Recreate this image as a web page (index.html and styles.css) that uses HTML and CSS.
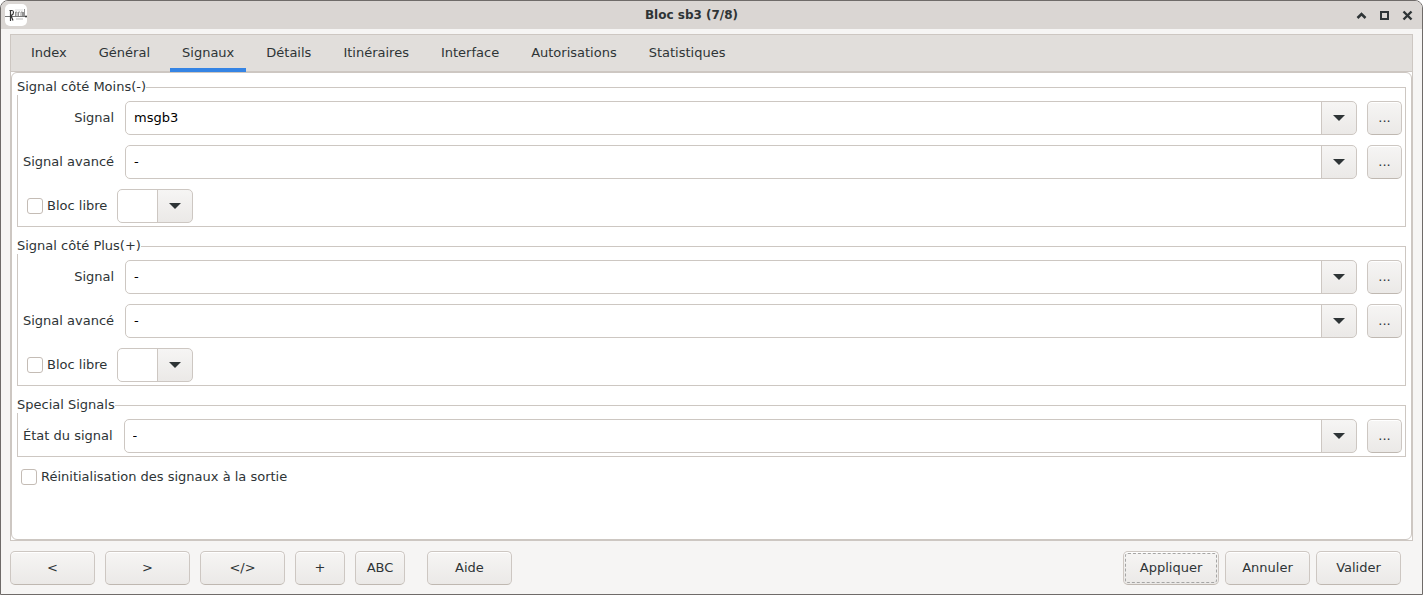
FILE: index.html
```html
<!DOCTYPE html>
<html lang="fr">
<head>
  <meta charset="UTF-8">
  <meta name="viewport" content="width=device-width, initial-scale=1.0">
  <title>Bloc sb3 (7/8)</title>
  <link rel="stylesheet" href="styles.css">
</head>
<body>

<div class="window">
  <header class="titlebar">
    <svg class="logo" width="22" height="22" viewBox="0 0 22 22" aria-hidden="true">
      <rect width="22" height="22" rx="5" fill="#fff"/>
      <path d="M0 12.500h22" stroke="#555" stroke-width=".8"/>
      <path d="M5.500 6v11M4.500 6.500h2.500q1.500 0 1.500 2t-2.500 3l2 5" fill="none" stroke="#333" stroke-width="1.200"/>
      <path d="M10.500 8v4.500h1.500v-4.500zM15 8h-1.500v4.500h1.500M16 12.500v-4.500h1.500v4.500M18.500 8v4.500M19.500 5v7.500" fill="none" stroke="#777" stroke-width=".8"/>
      <path d="M10 6h8" stroke="#ddd" stroke-width="1"/>
      <path d="M11 15h7" stroke="#bbb" stroke-width="1"/>
      <circle cx="21" cy="12.500" r="1" fill="#333"/>
    </svg>
    <h1 class="title">Bloc sb3 (7/8)</h1>
    <div class="controls">
      <button class="control" type="button" aria-label="Réduire">
        <svg width="11" height="11" viewBox="0 0 11 11"><path d="M1.500 8l4-4l4 4" fill="none" stroke="#2e3436" stroke-width="2.500"/></svg>
      </button>
      <button class="control" type="button" aria-label="Agrandir">
        <svg width="11" height="11" viewBox="0 0 11 11"><rect x="2" y="2" width="7" height="7" fill="none" stroke="#2e3436" stroke-width="2"/></svg>
      </button>
      <button class="control" type="button" aria-label="Fermer">
        <svg width="11" height="11" viewBox="0 0 11 11"><path d="M1.500 1.500l8 8M9.500 1.500l-8 8" fill="none" stroke="#2e3436" stroke-width="2.400"/></svg>
      </button>
    </div>
  </header>

  <main class="notebook">
    <nav class="tabs">
      <a class="tab" href="#index">Index</a>
      <a class="tab" href="#general">Général</a>
      <a class="tab active" href="#signaux">Signaux</a>
      <a class="tab" href="#details">Détails</a>
      <a class="tab" href="#itineraires">Itinéraires</a>
      <a class="tab" href="#interface">Interface</a>
      <a class="tab" href="#autorisations">Autorisations</a>
      <a class="tab" href="#statistiques">Statistiques</a>
    </nav>

    <form class="page" id="signaux">
      <fieldset class="group">
        <legend>Signal côté Moins(-)</legend>
        <div class="fields">
          <label for="minus-signal">Signal</label>
          <select class="combo" id="minus-signal"><option>msgb3</option></select>
          <button class="btn more" type="button">...</button>
          <label for="minus-distant">Signal avancé</label>
          <select class="combo" id="minus-distant"><option>-</option></select>
          <button class="btn more" type="button">...</button>
        </div>
        <div class="free">
          <label class="check"><input type="checkbox">Bloc libre</label>
          <select class="combo small" aria-label="Bloc libre"><option></option></select>
        </div>
      </fieldset>

      <fieldset class="group">
        <legend>Signal côté Plus(+)</legend>
        <div class="fields">
          <label for="plus-signal">Signal</label>
          <select class="combo" id="plus-signal"><option>-</option></select>
          <button class="btn more" type="button">...</button>
          <label for="plus-distant">Signal avancé</label>
          <select class="combo" id="plus-distant"><option>-</option></select>
          <button class="btn more" type="button">...</button>
        </div>
        <div class="free">
          <label class="check"><input type="checkbox">Bloc libre</label>
          <select class="combo small" aria-label="Bloc libre"><option></option></select>
        </div>
      </fieldset>

      <fieldset class="group">
        <legend>Special Signals</legend>
        <div class="fields">
          <label for="state">État du signal</label>
          <select class="combo" id="state"><option>-</option></select>
          <button class="btn more" type="button">...</button>
        </div>
      </fieldset>

      <label class="check reset"><input type="checkbox">Réinitialisation des signaux à la sortie</label>
    </form>
  </main>

  <footer class="actions">
    <div class="nav">
      <button class="btn" type="button">&lt;</button>
      <button class="btn" type="button">&gt;</button>
      <button class="btn" type="button">&lt;/&gt;</button>
      <button class="btn narrow" type="button">+</button>
      <button class="btn narrow" type="button">ABC</button>
    </div>
    <button class="btn" type="button">Aide</button>
    <div class="confirm">
      <button class="btn default" type="button">Appliquer</button>
      <button class="btn" type="button">Annuler</button>
      <button class="btn" type="button">Valider</button>
    </div>
  </footer>
</div>

</body>
</html>
```
FILE: styles.css
```css
* {
  box-sizing: border-box;
  margin: 0;
  padding: 0;
}

body {
  background: #fff;
  color: #2e3436;
  font-family: 'DejaVu Sans', sans-serif;
  font-size: 13px;
  line-height: 16px;
}

button, select, input {
  font: inherit;
  color: inherit;
}

.window {
  display: flex;
  flex-direction: column;
  min-height: 100vh;
  background: #f6f5f4;
  border: 1px solid #6f6b69;
  border-radius: 8px 8px 0 0;
  overflow: hidden;
}

.titlebar {
  display: flex;
  align-items: center;
  height: 28px;
  padding: 0 9px 0 4px;
  background: #dad6d3;
}

.title {
  flex: 1;
  font-size: 12px;
  font-weight: bold;
  line-height: 18px;
  text-align: center;
}

.controls {
  display: flex;
  gap: 12px;
}

.control {
  display: flex;
  background: none;
  border: 0;
}

.notebook {
  display: flex;
  flex-direction: column;
  flex: 1;
  margin: 5px 9px 0;
  border: 1px solid #cdc7c2;
  background: #fff;
}

.tabs {
  display: flex;
  gap: 8px;
  padding: 0 8px;
  background: #e1dedb;
  border-bottom: 1px solid #cdc7c2;
}

.tab {
  padding: 10px 12px 7px;
  border-bottom: 4px solid transparent;
  margin-bottom: -1px;
  color: inherit;
  text-decoration: none;
}

.tab.active {
  border-color: #3584e4;
}

.page {
  display: flex;
  flex-direction: column;
  flex: 1;
  gap: 12px;
  padding: 7px 5px;
  border: 1px solid #cdc7c2;
  border-radius: 6px;
}

.group {
  min-width: 0;
  padding: 6px 3px 3px 5px;
  border: 1px solid #cdc7c2;
}

.group legend {
  height: 15px;
  margin-left: -6px;
  line-height: 14px;
  background: #fff;
}

.fields {
  display: grid;
  grid-template-columns: auto 1fr auto;
  gap: 10px;
  align-items: center;
}

.fields label {
  padding-right: 1px;
  text-align: right;
}

.combo {
  appearance: none;
  width: 100%;
  height: 34px;
  padding: 0 44px 0 8px;
  border: 1px solid #cdc7c2;
  border-radius: 5px;
  color: #000;
  background:
    url("data:image/svg+xml,%3Csvg xmlns='http://www.w3.org/2000/svg' width='12' height='6'%3E%3Cpath d='M0 0h12L6 6z' fill='%232e3436'/%3E%3C/svg%3E") right 11px center no-repeat,
    linear-gradient(#cdc7c2, #cdc7c2) right 34px top / 1px 100% no-repeat,
    linear-gradient(#f6f5f4, #ebe9e7) right top / 34px 100% no-repeat,
    #fff;
}

.combo.small {
  width: 76px;
}

.free {
  display: flex;
  align-items: center;
  gap: 10px;
  margin-top: 10px;
  padding-left: 4px;
}

.check {
  display: flex;
  align-items: center;
  gap: 4px;
}

.check input {
  appearance: none;
  width: 16px;
  height: 16px;
  border: 1px solid #c4bcb5;
  border-radius: 3px;
  background: #fff;
}

.check input:checked {
  background: #3584e4;
}

.reset {
  align-self: flex-start;
  padding-left: 4px;
}

.btn {
  width: 85px;
  height: 34px;
  border: 1px solid #cdc7c2;
  border-bottom-color: #bfb8b1;
  border-radius: 5px;
  background: linear-gradient(#f6f5f4, #ebe9e7);
  box-shadow: inset 0 1px #fff;
}

.btn.more {
  width: 35px;
}

.btn.narrow {
  width: 50px;
}

.btn.default {
  width: 96px;
  outline: 1px dashed #a5a5a4;
  outline-offset: -3px;
}

.actions {
  display: flex;
  gap: 22px;
  padding: 10px 21px 9px 9px;
}

.nav {
  display: flex;
  gap: 10px;
}

.confirm {
  display: flex;
  gap: 6px;
  margin-left: auto;
}
```
